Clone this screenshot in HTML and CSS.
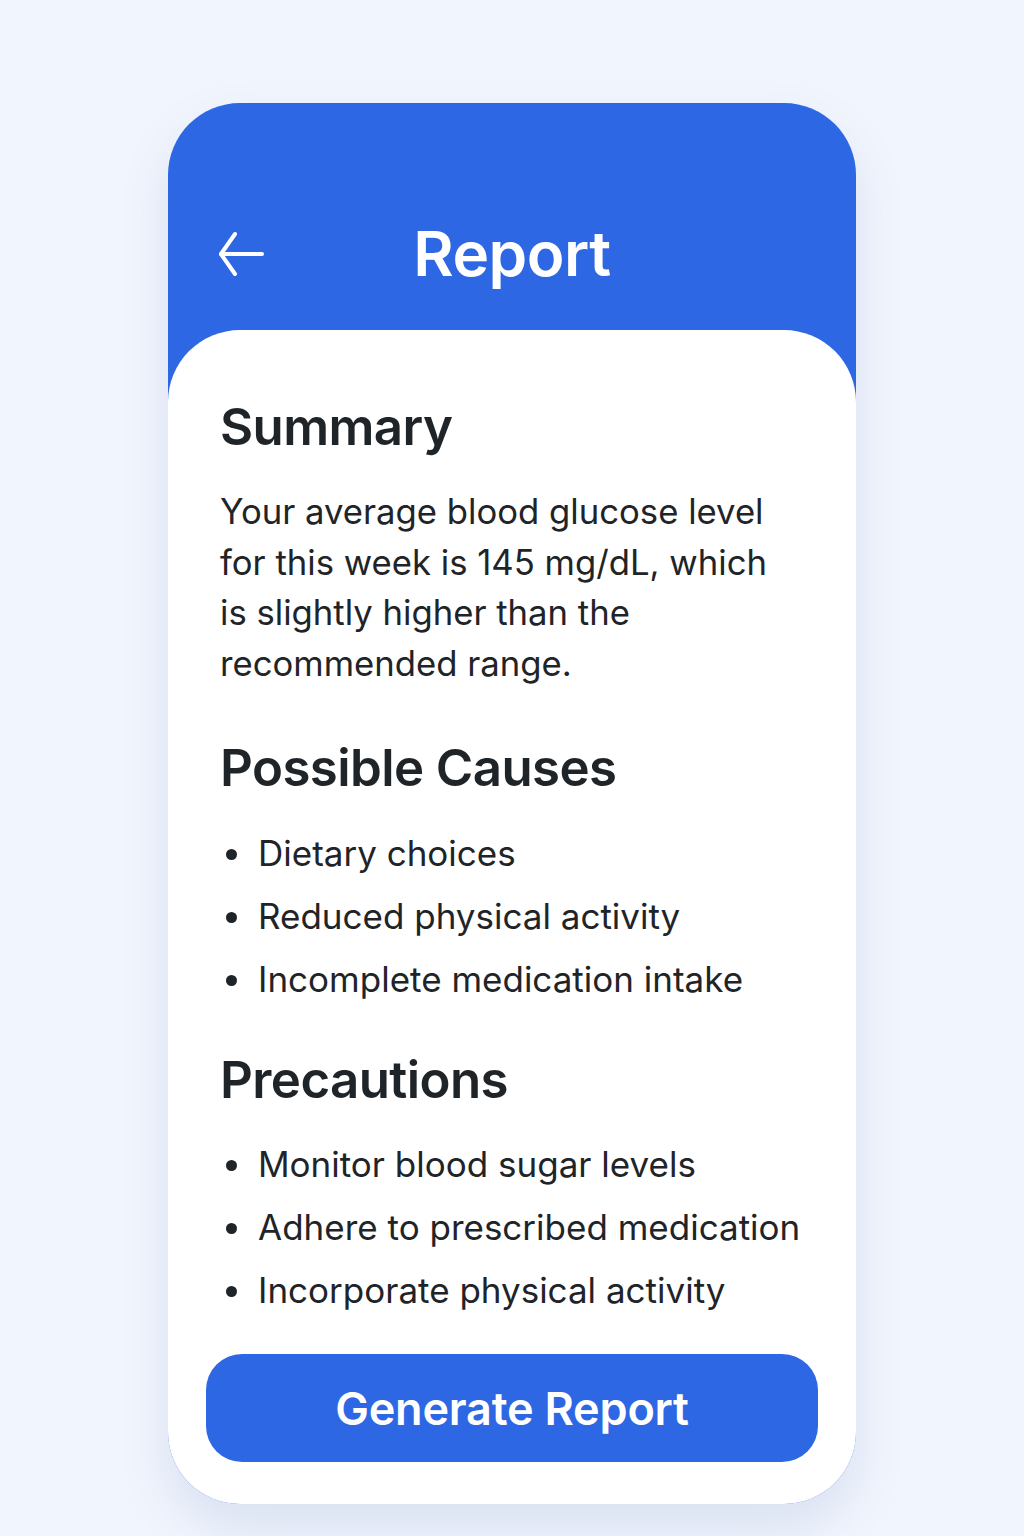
FILE: index.html
```html
<!DOCTYPE html>
<html lang="en">
<head>
<meta charset="utf-8">
<title>Report</title>
<link rel="stylesheet" href="styles.css">
</head>
<body>
<main class="page">
  <section class="card">
    <header class="header">
      <button class="back" aria-label="Back">
        <svg width="48" height="48" viewBox="0 0 48 48" fill="none" stroke="#ffffff" stroke-width="4" stroke-linecap="round" stroke-linejoin="round">
          <path d="M44 24H3"/>
          <path d="M17 4L3 24l14 20"/>
        </svg>
      </button>
      <h1 class="title">Report</h1>
    </header>
    <div class="content">
      <h2 class="heading heading-first">Summary</h2>
      <p class="summary">Your average blood glucose level for this week is 145 mg/dL, which is slightly higher than the recommended range.</p>
      <h2 class="heading">Possible Causes</h2>
      <ul class="list">
        <li>Dietary choices</li>
        <li>Reduced physical activity</li>
        <li>Incomplete medication intake</li>
      </ul>
      <h2 class="heading">Precautions</h2>
      <ul class="list list-tight">
        <li>Monitor blood sugar levels</li>
        <li>Adhere to prescribed medication</li>
        <li>Incorporate physical activity</li>
      </ul>
      <button class="generate">Generate Report</button>
    </div>
  </section>
</main>
</body>
</html>
```

FILE: styles.css
```css
* { box-sizing: border-box; }

body {
  margin: 0;
  background: #f1f5fd;
  font-family: "Inter", "Noto Sans", sans-serif;
  color: #1f2428;
}

.page {
  display: flex;
  justify-content: center;
  padding-top: 103px;
  min-height: 1536px;
}

.card {
  width: 688px;
  height: 1401px;
  border-radius: 72px;
  background: #2d67e3;
  overflow: hidden;
  box-shadow: 0 24px 50px rgba(60, 90, 160, 0.13);
  display: flex;
  flex-direction: column;
}

.header {
  height: 227px;
  flex: none;
  display: flex;
  align-items: center;
  position: relative;
  padding: 74px 0 0 50px;
}

.back {
  background: none;
  border: 0;
  padding: 0;
  width: 48px;
  height: 48px;
  display: flex;
  cursor: pointer;
}

.title {
  position: absolute;
  left: 0;
  right: 0;
  top: 74px;
  bottom: 0;
  margin: 0;
  display: flex;
  align-items: center;
  justify-content: center;
  color: #ffffff;
  font-size: 62px;
  font-weight: 600;
  letter-spacing: -0.5px;
  pointer-events: none;
}

.content {
  flex: 1;
  background: #ffffff;
  border-radius: 72px 72px 0 0;
  padding: 66px 38px 42px 52px;
  display: flex;
  flex-direction: column;
}

.heading {
  margin: 38px 0 0;
  font-size: 51px;
  font-weight: 600;
  line-height: 1.2;
  letter-spacing: -0.6px;
  color: #1f2428;
}

.heading-first { margin-top: 0; }

.summary {
  margin: 29px 0 11px;
  font-size: 34.7px;
  line-height: 50.5px;
  font-weight: 400;
  padding-right: 40px;
}

.list {
  margin: 24px 0 0;
  padding: 0 0 0 38px;
  list-style: none;
}

.list-tight { margin-top: 22px; }

.list li {
  position: relative;
  font-size: 35px;
  line-height: 63px;
}

.list li::before {
  content: "";
  position: absolute;
  left: -32px;
  top: 27px;
  width: 11px;
  height: 11px;
  border-radius: 50%;
  background: #1f2428;
}

.generate {
  margin-top: auto;
  margin-left: -14px;
  height: 108px;
  width: 612px;
  border: 0;
  border-radius: 36px;
  background: #2d67e3;
  color: #ffffff;
  font-family: "Inter", "Noto Sans", sans-serif;
  font-size: 45px;
  font-weight: 600;
  letter-spacing: -0.2px;
  cursor: pointer;
}
```
